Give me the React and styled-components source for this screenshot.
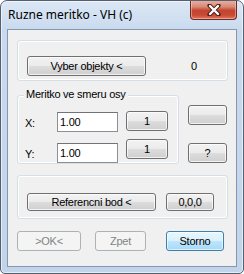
import React from "react";
import styled, { createGlobalStyle, css } from "styled-components";

const GlobalStyle = createGlobalStyle`
  html, body {
    margin: 0;
    padding: 0;
    background: #ffffff;
  }
`;

const Window = styled.div`
  box-sizing: border-box;
  width: 244px;
  height: 274px;
  border: 1px solid #55606e;
  border-radius: 7px 7px 5px 5px;
  background: linear-gradient(180deg, #dbe7f5 0px, #c9daee 30px, #c2d4ea 100%);
  box-shadow: inset 0 0 0 1px rgba(255, 255, 255, 0.55);
  display: flex;
  flex-direction: column;
  overflow: hidden;
`;

const TitleBar = styled.div`
  height: 28px;
  display: flex;
  align-items: flex-start;
  justify-content: space-between;
  padding-left: 7px;
`;

const Title = styled.span`
  font-family: "Noto Sans", "Open Sans", sans-serif;
  font-size: 12px;
  line-height: 12px;
  color: #000;
  margin-top: 8px;
`;

const CloseButton = styled.div`
  box-sizing: border-box;
  width: 47px;
  height: 20px;
  margin-top: -1px;
  margin-right: 6px;
  border: 1px solid #6b2a22;
  border-top: none;
  border-radius: 0 0 4px 4px;
  background: linear-gradient(
    180deg,
    #eab3a6 0%,
    #d98a78 35%,
    #c2452f 55%,
    #c94a33 80%,
    #e07a5f 100%
  );
  box-shadow: inset 0 0 0 1px rgba(255, 220, 210, 0.45);
  display: flex;
  align-items: center;
  justify-content: center;
`;

const Client = styled.div`
  flex: 1;
  margin: 0 6px 6px 6px;
  border: 1px solid #8496b0;
  background: #f0f0f0;
  padding: 10px 8px 0 9px;
  display: flex;
  flex-direction: column;
  font-family: "Liberation Sans", Arial, sans-serif;
  font-size: 11px;
  letter-spacing: -0.25px;
  color: #000;
`;

const Group = styled.div`
  position: relative;
  box-sizing: border-box;
  width: ${(p) => p.$w}px;
  height: ${(p) => p.$h}px;
  margin-top: ${(p) => p.$mt || 0}px;
  border: 1px solid #d5dfe5;
  border-radius: 3px;
  box-shadow: inset 0 0 0 1px #ffffff;
  padding: ${(p) => p.$pad};
  display: flex;
  flex-direction: ${(p) => (p.$col ? "column" : "row")};
  align-items: flex-start;
`;

const Caption = styled.span`
  position: absolute;
  left: 6px;
  top: -8px;
  padding: 0 2px;
  background: #f0f0f0;
  line-height: 13px;
`;

const buttonBase = css`
  box-sizing: border-box;
  width: ${(p) => p.$w}px;
  height: ${(p) => p.$h || 20}px;
  margin-top: ${(p) => p.$mt || 0}px;
  margin-left: ${(p) => p.$ml || 0}px;
  border-radius: 3px;
  font-family: inherit;
  font-size: 11px;
  letter-spacing: -0.25px;
  padding: 0;
  display: flex;
  align-items: center;
  justify-content: center;
  flex-shrink: 0;
`;

const Button = styled.div`
  ${buttonBase}
  border: 1px solid #707070;
  color: #000;
  background: linear-gradient(
    180deg,
    #f2f2f2 0%,
    #ebebeb 50%,
    #dddddd 50%,
    #cfcfcf 100%
  );
  box-shadow: inset 0 0 0 1px rgba(255, 255, 255, 0.7);

  ${(p) =>
    p.$disabled &&
    css`
      border-color: #adb2b5;
      background: #f4f4f4;
      box-shadow: none;
      color: #838383;
    `}

  ${(p) =>
    p.$default &&
    css`
      border-color: #3c7fb1;
      background: linear-gradient(
        180deg,
        #eaf6fd 0%,
        #d9f0fc 50%,
        #bee6fd 50%,
        #a7d9f5 100%
      );
      box-shadow: inset 0 0 0 1px rgba(255, 255, 255, 0.6);
    `}
`;

const ValueText = styled.span`
  margin-left: 45px;
  line-height: 20px;
`;

const Middle = styled.div`
  display: flex;
  margin-top: 14px;
  gap: 9px;
`;

const Row = styled.div`
  display: flex;
  align-items: flex-start;
  margin-top: ${(p) => p.$mt}px;
`;

const AxisLabel = styled.span`
  width: 32px;
  line-height: 20px;
  margin-top: 1px;
`;

const Field = styled.div`
  box-sizing: border-box;
  width: 61px;
  height: 20px;
  margin-right: 8px;
  border: 1px solid #8c8f96;
  border-top-color: #70737a;
  background: #fff;
  padding-left: 2px;
  line-height: 18px;
`;

const SideColumn = styled.div`
  display: flex;
  flex-direction: column;
  padding-top: 10px;
  gap: 18px;
`;

const Footer = styled.div`
  display: flex;
  margin-top: 12px;
`;

const CloseGlyph = () => (
  <svg width="14" height="12" viewBox="0 0 14 12">
    <path
      d="M2.5 1.5 L11.5 10.5 M11.5 1.5 L2.5 10.5"
      stroke="#4a1e18"
      strokeWidth="4.2"
      strokeLinecap="round"
      fill="none"
    />
    <path
      d="M3 2 L11 10 M11 2 L3 10"
      stroke="#ffffff"
      strokeWidth="2.4"
      strokeLinecap="round"
      fill="none"
    />
  </svg>
);

export default function App() {
  return (
    <>
      <GlobalStyle />
      <Window>
        <TitleBar>
          <Title>Ruzne meritko - VH (c)</Title>
          <CloseButton>
            <CloseGlyph />
          </CloseButton>
        </TitleBar>
        <Client>
          <Group $w={211} $h={41} $pad="15px 9px 0 9px">
            <Button $w={119}>Vyber objekty &lt;</Button>
            <ValueText>0</ValueText>
          </Group>

          <Middle>
            <Group $w={162} $h={69} $pad="16px 7px 0 7px" $col>
              <Caption>Meritko ve smeru osy</Caption>
              <Row $mt={0}>
                <AxisLabel>X:</AxisLabel>
                <Field>1.00</Field>
                <Button $w={42} $mt={-1}>1</Button>
              </Row>
              <Row $mt={10}>
                <AxisLabel>Y:</AxisLabel>
                <Field>1.00</Field>
                <Button $w={42} $mt={-4}>1</Button>
              </Row>
            </Group>
            <SideColumn>
              <Button $w={39} />
              <Button $w={39}>?</Button>
            </SideColumn>
          </Middle>

          <Group $w={211} $h={44} $mt={11} $pad="17px 9px 0 9px">
            <Button $w={129} $h={18}>Referencni bod &lt;</Button>
            <Button $w={48} $h={18} $ml={10}>0,0,0</Button>
          </Group>

          <Footer>
            <Button $w={64} $disabled>&gt;OK&lt;</Button>
            <Button $w={51} $ml={14} $disabled>Zpet</Button>
            <Button $w={58} $ml={20} $default>Storno</Button>
          </Footer>
        </Client>
      </Window>
    </>
  );
}
